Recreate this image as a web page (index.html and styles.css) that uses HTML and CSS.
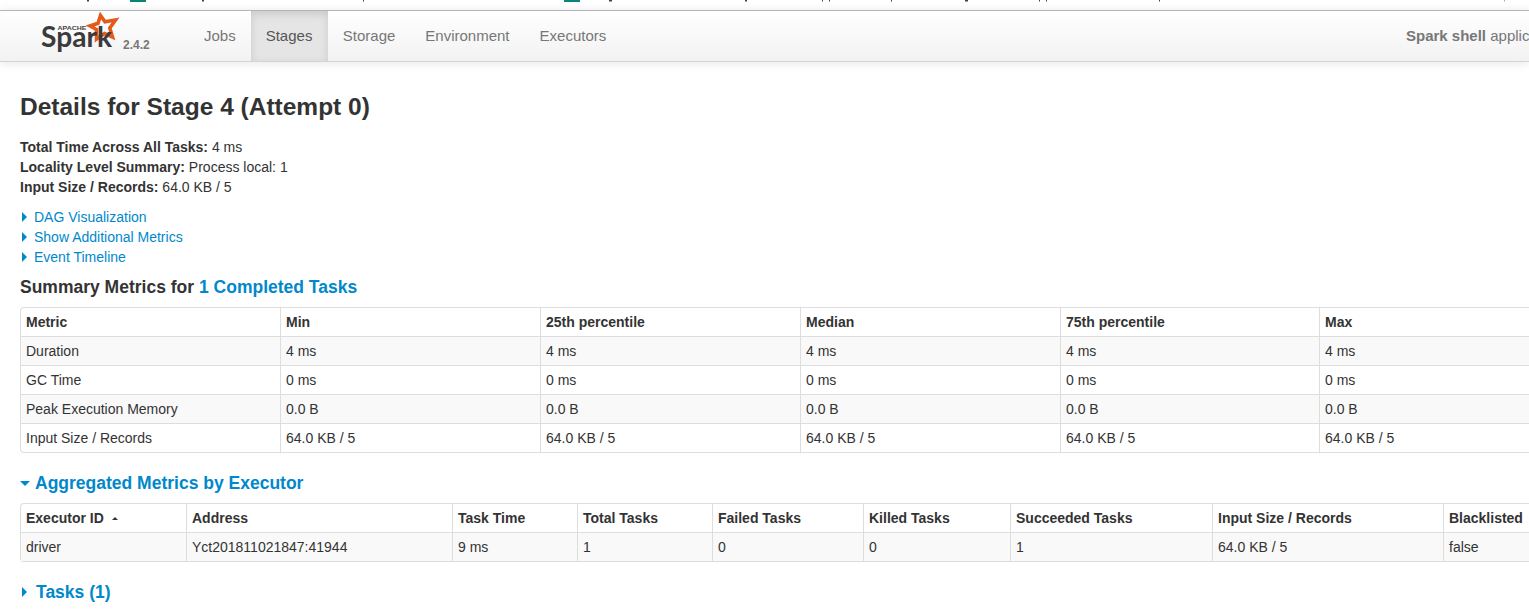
FILE: index.html
```html
<!DOCTYPE html>
<html lang="en">
<head>
<meta charset="utf-8">
<title>Details for Stage 4 (Attempt 0)</title>
<link rel="stylesheet" href="styles.css">
</head>
<body>
<div class="page">
  <svg class="clip-strip" width="1529" height="10" viewBox="0 0 1529 10" aria-hidden="true">
    <rect class="teal" x="130" width="16" height="2"/>
    <rect class="teal" x="564" width="16" height="2"/>
    <rect class="ink" x="87" width="2" height="1.5"/>
    <rect class="ink" x="202" width="2" height="1.5"/>
    <rect class="ink" x="363" width="1" height="1.5"/>
    <rect class="ink" x="609" width="3" height="1.5"/>
    <rect class="ink" x="745" width="2" height="1.5"/>
    <rect class="ink" x="822" width="1" height="1.5"/>
    <rect class="ink" x="829" width="1" height="1.5"/>
    <rect class="ink" x="891" width="1" height="1.5"/>
    <rect class="ink" x="965" width="3" height="1.5"/>
    <rect class="ink" x="1039" width="1" height="1.5"/>
    <rect class="ink" x="1046" width="1" height="1.5"/>
    <rect class="ink" x="1159" width="1" height="1.5"/>
    <rect class="soft" x="1504" width="1" height="1.5"/>
  </svg>
  <header class="navbar">
    <a class="brand" href="#">
      <svg class="logo" width="84" height="44" viewBox="36 12 84 44">
        <polygon class="logo-star" points="100.500,15.500 105,21.800 115.500,20 109.800,28 112.500,37 104.500,33.500 96.500,39 96.500,29.500 90,26 98,23.300"/>
        <text class="logo-apache" x="57.500" y="30" textLength="29" lengthAdjust="spacingAndGlyphs">APACHE</text>
        <text class="logo-word" x="41" y="47" textLength="71" lengthAdjust="spacingAndGlyphs">Spark</text>
      </svg>
      <span class="version">2.4.2</span>
    </a>
    <nav class="tabs">
      <a href="#" class="tab">Jobs</a>
      <a href="#" class="tab active">Stages</a>
      <a href="#" class="tab">Storage</a>
      <a href="#" class="tab">Environment</a>
      <a href="#" class="tab">Executors</a>
    </nav>
    <p class="app-name"><strong>Spark shell</strong> application UI</p>
  </header>

  <main class="content">
    <h3 class="page-title">Details for Stage 4 (Attempt 0)</h3>
    <ul class="facts">
      <li><strong>Total Time Across All Tasks:</strong> 4 ms</li>
      <li><strong>Locality Level Summary:</strong> Process local: 1</li>
      <li><strong>Input Size / Records:</strong> 64.0 KB / 5</li>
    </ul>
    <ul class="toggles">
      <li><span class="arrow-right"></span><a href="#">DAG Visualization</a></li>
      <li><span class="arrow-right"></span><a href="#">Show Additional Metrics</a></li>
      <li><span class="arrow-right"></span><a href="#">Event Timeline</a></li>
    </ul>

    <h4 class="section first">Summary Metrics for <a href="#">1 Completed Tasks</a></h4>
    <table class="grid summary">
      <colgroup>
        <col class="s1"><col class="s3"><col class="s3"><col class="s3"><col class="s2"><col class="s3">
      </colgroup>
      <thead>
        <tr><th>Metric</th><th>Min</th><th>25th percentile</th><th>Median</th><th>75th percentile</th><th>Max</th></tr>
      </thead>
      <tbody>
        <tr><td>Duration</td><td>4 ms</td><td>4 ms</td><td>4 ms</td><td>4 ms</td><td>4 ms</td></tr>
        <tr><td>GC Time</td><td>0 ms</td><td>0 ms</td><td>0 ms</td><td>0 ms</td><td>0 ms</td></tr>
        <tr><td>Peak Execution Memory</td><td>0.0 B</td><td>0.0 B</td><td>0.0 B</td><td>0.0 B</td><td>0.0 B</td></tr>
        <tr><td>Input Size / Records</td><td>64.0 KB / 5</td><td>64.0 KB / 5</td><td>64.0 KB / 5</td><td>64.0 KB / 5</td><td>64.0 KB / 5</td></tr>
      </tbody>
    </table>

    <h4 class="section"><span class="arrow-down"></span><a href="#">Aggregated Metrics by Executor</a></h4>
    <table class="grid executors">
      <colgroup>
        <col class="e1"><col class="e2"><col class="e3"><col class="e4"><col class="e5"><col class="e6"><col class="e7"><col class="e8"><col class="e9">
      </colgroup>
      <thead>
        <tr><th>Executor ID<span class="sort-up"></span></th><th>Address</th><th>Task Time</th><th>Total Tasks</th><th>Failed Tasks</th><th>Killed Tasks</th><th>Succeeded Tasks</th><th>Input Size / Records</th><th>Blacklisted</th></tr>
      </thead>
      <tbody>
        <tr><td>driver</td><td>Yct201811021847:41944</td><td>9 ms</td><td>1</td><td>0</td><td>0</td><td>1</td><td>64.0 KB / 5</td><td>false</td></tr>
      </tbody>
    </table>

    <h4 class="section"><span class="arrow-right big"></span><a href="#">Tasks (1)</a></h4>
  </main>
</div>
</body>
</html>
```

FILE: styles.css
```css
html, body {
  margin: 0;
  padding: 0;
  height: 100%;
  overflow: hidden;
  background: #fff;
}

body {
  font-family: "Liberation Sans", Arial, sans-serif;
  font-size: 14px;
  line-height: 20px;
  color: #333;
}

a {
  color: #0088cc;
  text-decoration: none;
}

.page {
  width: 1598px;
}

.clip-strip {
  display: block;
}

.teal { fill: #0b8478; }
.ink { fill: #3c4257; }
.soft { fill: #aaa; }

.navbar {
  display: flex;
  align-items: stretch;
  width: 1529px;
  height: 50px;
  box-sizing: content-box;
  border-top: 1px solid #b5b5b5;
  border-bottom: 1px solid #d4d4d4;
  background: linear-gradient(to bottom, #ffffff, #f2f2f2);
  box-shadow: 0 1px 10px rgba(0, 0, 0, 0.1);
}

.brand {
  display: flex;
  width: 189px;
  flex: none;
  position: relative;
}

.logo {
  display: block;
  margin-left: 36px;
  margin-top: 1px;
  flex: none;
}

.logo-star {
  fill: none;
  stroke: #e25a1c;
  stroke-width: 3.6;
  stroke-linejoin: miter;
}

.logo-apache {
  font-family: "Liberation Sans", Arial, sans-serif;
  font-size: 5px;
  font-weight: 700;
  fill: #444;
}

.logo-word {
  font-family: Lato, "Open Sans", sans-serif;
  font-size: 28px;
  font-weight: 700;
  fill: #3b3a3c;
}

.version {
  position: absolute;
  left: 123px;
  top: 24px;
  font-size: 12px;
  font-weight: 700;
  color: #777;
}

.tabs {
  display: flex;
}

.tab {
  display: block;
  padding: 0 15px;
  font-size: 15px;
  line-height: 49px;
  color: #777;
}

.tab.active {
  padding-right: 15.400px;
  color: #555;
  background: #e5e5e5;
  box-shadow: inset 0 3px 8px rgba(0, 0, 0, 0.125);
}

.app-name {
  position: absolute;
  left: 1406px;
  top: 11px;
  margin: 0;
  font-size: 15px;
  line-height: 49px;
  white-space: nowrap;
  color: #777;
}

.content {
  padding: 0 20px;
}

.page-title {
  margin: 25px 0 10px;
  font-size: 24.500px;
  line-height: 40px;
  font-weight: 700;
  color: #333;
}

.facts,
.toggles {
  list-style: none;
  margin: 0 0 10px;
  padding: 0;
}

.toggles li {
  display: flex;
  align-items: center;
}

.arrow-right {
  width: 0;
  height: 0;
  flex: none;
  margin: 0 7px 0 2px;
  border-top: 5px solid transparent;
  border-bottom: 5px solid transparent;
  border-left: 5px solid #0088cc;
}

.arrow-right.big {
  margin-right: 9px;
}

.arrow-down {
  width: 0;
  height: 0;
  flex: none;
  margin-right: 5px;
  border-left: 5px solid transparent;
  border-right: 5px solid transparent;
  border-top: 5px solid #0088cc;
}

.sort-up {
  display: inline-block;
  width: 0;
  height: 0;
  margin-left: 8px;
  vertical-align: 3px;
  border-left: 3px solid transparent;
  border-right: 3px solid transparent;
  border-bottom: 3px solid #333;
}

.section {
  display: flex;
  align-items: center;
  margin: 20px 0 10px;
  font-size: 17.500px;
  line-height: 20px;
  font-weight: 700;
  color: #333;
  white-space: pre;
}

.section.first {
  margin-top: 0;
}

.grid {
  table-layout: fixed;
  border-collapse: separate;
  border-spacing: 0;
  border: 1px solid #ddd;
  border-left: 1px solid #ddd;
  border-right: 0;
  border-radius: 4px 0 0 4px;
}

.summary { width: 1559px; }
.executors { width: 1559px; }

.s1 { width: 259px; }
.s2 { width: 259px; }
.s3 { width: 260px; }

.e1 { width: 165px; }
.e2 { width: 266px; }
.e3 { width: 125px; }
.e4 { width: 135px; }
.e5 { width: 151px; }
.e6 { width: 147px; }
.e7 { width: 202px; }
.e8 { width: 231px; }
.e9 { width: 137px; }

.grid th,
.grid td {
  padding: 4px 5px;
  text-align: left;
  vertical-align: top;
  line-height: 20px;
  border-left: 1px solid #ddd;
  border-top: 1px solid #ddd;
  white-space: nowrap;
}

.grid th:first-child,
.grid td:first-child {
  border-left: 0;
}

.grid thead th {
  border-top: 0;
  font-weight: 700;
}

.grid tbody tr:nth-child(odd) td {
  background: #f9f9f9;
}
```
